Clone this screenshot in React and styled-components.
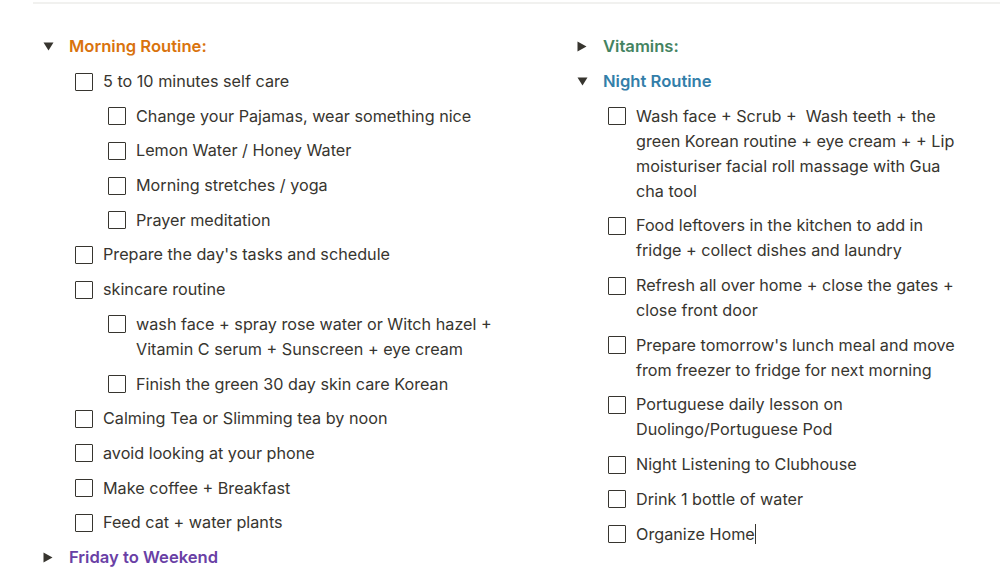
import React from "react";
import styled, { createGlobalStyle } from "styled-components";

const Global = createGlobalStyle`
  html, body { margin: 0; padding: 0; background: #ffffff; }
  body {
    font-family: Inter, "Noto Sans", "Liberation Sans", sans-serif;
    color: #37352f;
    -webkit-font-smoothing: antialiased;
  }
`;

const Page = styled.div`
  width: 1000px;
  height: 580px;
  overflow: hidden;
  position: relative;
`;

const TopRule = styled.div`
  margin-left: 33px;
  margin-top: 2px;
  height: 2px;
  background: #f1f1ef;
`;

const Columns = styled.div`
  display: flex;
  padding-top: 25.5px;
`;

const Column = styled.div`
  box-sizing: border-box;
  width: ${(p) => p.$width || "auto"};
  flex: ${(p) => (p.$width ? "none" : "1")};
  padding-left: ${(p) => p.$left}px;
`;

const ToggleRow = styled.div`
  display: flex;
  align-items: center;
  height: 34.7px;
`;

const Arrow = styled.span`
  display: inline-flex;
  width: 26px;
  flex: none;
  align-items: center;
`;

const Heading = styled.span`
  font-size: 16.6px;
  font-weight: 600;
  line-height: 25px;
  color: ${(p) => p.$color};
`;

const Children = styled.div`
  padding-left: ${(p) => p.$indent || 32}px;
`;

const Nested = styled.div`
  padding-left: 33px;
`;

const TodoRow = styled.div`
  display: flex;
  align-items: flex-start;
  padding: 4.85px 0;
  max-width: ${(p) => p.$max || "none"};
`;

const Box = styled.span`
  box-sizing: border-box;
  flex: none;
  width: 18px;
  height: 18px;
  margin-top: 3.5px;
  margin-right: 10px;
  border: 1.7px solid #37352f;
  border-radius: 1px;
`;

const Text = styled.span`
  font-size: 16.2px;
  line-height: 25px;
  color: #37352f;
  white-space: pre-wrap;
`;

const Caret = styled.span`
  display: inline-block;
  width: 1px;
  height: 20px;
  background: #37352f;
  vertical-align: -4px;
`;

const DownArrow = () => (
  <svg width="11" height="9" viewBox="0 0 11 9">
    <polygon points="0.5,0.5 10.5,0.5 5.5,8.5" fill="#37352f" />
  </svg>
);

const RightArrow = () => (
  <svg width="10" height="11" viewBox="0 0 10 11">
    <polygon points="0.5,0.5 9.5,5.5 0.5,10.5" fill="#37352f" />
  </svg>
);

const Todo = ({ children, max }) => (
  <TodoRow $max={max}>
    <Box />
    <Text>{children}</Text>
  </TodoRow>
);

const Toggle = ({ open, color, title }) => (
  <ToggleRow>
    <Arrow>{open ? <DownArrow /> : <RightArrow />}</Arrow>
    <Heading $color={color}>{title}</Heading>
  </ToggleRow>
);

export default function App() {
  return (
    <Page>
      <Global />
      <TopRule />
      <Columns>
        <Column $width="577px" $left={43}>
          <Toggle open color="#d9730d" title="Morning Routine:" />
          <Children>
            <Todo>5 to 10 minutes self care</Todo>
            <Nested>
              <Todo>Change your Pajamas, wear something nice</Todo>
              <Todo>Lemon Water / Honey Water</Todo>
              <Todo>Morning stretches / yoga</Todo>
              <Todo>Prayer meditation</Todo>
            </Nested>
            <Todo>Prepare the day's tasks and schedule</Todo>
            <Todo>skincare routine</Todo>
            <Nested>
              <Todo max="400px">
                wash face + spray rose water or Witch hazel + Vitamin C serum + Sunscreen + eye cream
              </Todo>
              <Todo>Finish the green 30 day skin care Korean</Todo>
            </Nested>
            <Todo>Calming Tea or Slimming tea by noon</Todo>
            <Todo>avoid looking at your phone</Todo>
            <Todo>Make coffee + Breakfast</Todo>
            <Todo>Feed cat + water plants</Todo>
          </Children>
          <Toggle color="#6940a5" title="Friday to Weekend" />
        </Column>
        <Column $left={0}>
          <Toggle color="#448361" title="Vitamins:" />
          <Toggle open color="#337ea9" title="Night Routine" />
          <Children $indent={31}>
            <Todo max="360px">
              Wash face + Scrub +  Wash teeth + the green Korean routine + eye cream + + Lip moisturiser facial roll massage with Gua cha tool
            </Todo>
            <Todo max="360px">
              Food leftovers in the kitchen to add in fridge + collect dishes and laundry
            </Todo>
            <Todo max="360px">Refresh all over home + close the gates + close front door</Todo>
            <Todo max="360px">
              Prepare tomorrow's lunch meal and move from freezer to fridge for next morning
            </Todo>
            <Todo max="360px">Portuguese daily lesson on Duolingo/Portuguese Pod</Todo>
            <Todo max="360px">Night Listening to Clubhouse</Todo>
            <Todo max="360px">Drink 1 bottle of water</Todo>
            <Todo max="360px">
              Organize Home
              <Caret />
            </Todo>
          </Children>
        </Column>
      </Columns>
    </Page>
  );
}
